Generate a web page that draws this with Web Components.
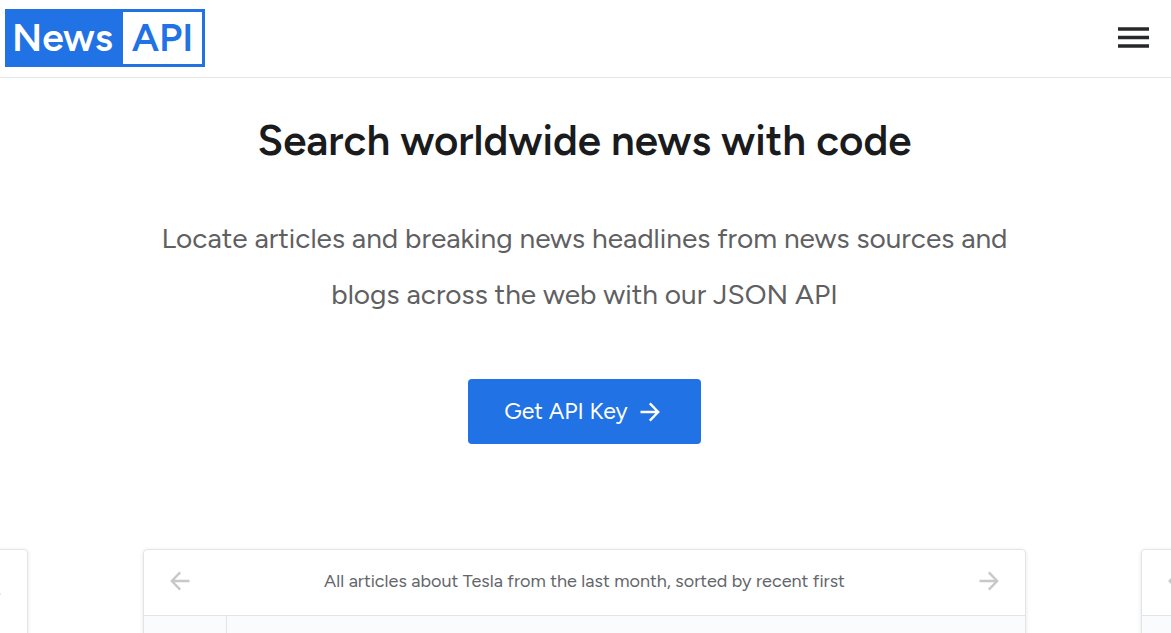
<!DOCTYPE html>
<html lang="en">
<head>
<meta charset="utf-8">
<meta name="viewport" content="width=device-width, initial-scale=1">
<title>News API</title>
<style>
  :root {
    --blue: #2172e5;
    --ink: #1a1b1d;
    --line: #e3e4e6;
  }
  body {
    margin: 0;
    background: #fff;
    color: var(--ink);
    font-family: Figtree, Lato, sans-serif;
  }
</style>
</head>
<body>
<site-header></site-header>
<main>
  <hero-section>
    <span slot="title">Search worldwide news with code</span>
    <span slot="text">Locate articles and breaking news headlines from news sources and blogs across the web with our JSON API</span>
    <cta-link slot="action" href="#register">Get API Key</cta-link>
  </hero-section>
  <example-carousel>
    <example-card tall></example-card>
    <example-card>All articles about Tesla from the last month, sorted by recent first</example-card>
    <example-card></example-card>
  </example-carousel>
</main>
<script>
const define = (name, html, setup) => {
  const template = document.createElement('template');
  template.innerHTML = html;
  customElements.define(name, class extends HTMLElement {
    constructor() {
      super();
      this.attachShadow({ mode: 'open' }).append(template.content.cloneNode(true));
    }
    connectedCallback() { if (setup) setup(this, this.shadowRoot); }
  });
};

define('site-logo', `
  <style>
    :host { display: block; }
    a {
      display: flex;
      box-sizing: border-box;
      width: 200px;
      border: 3px solid var(--blue);
      color: var(--blue);
      font-size: 39px;
      font-weight: 600;
      line-height: 52px;
      text-decoration: none;
    }
    span { flex: 1; text-align: center; }
    .news { box-sizing: border-box; flex: 0 0 115px; padding-right: 6px; background: var(--blue); color: #fff; }
  </style>
  <a href="#home"><span class="news">News</span><span>API</span></a>`);

define('site-header', `
  <style>
    :host { display: block; border-bottom: 1px solid var(--line); }
    header {
      display: flex;
      align-items: center;
      justify-content: space-between;
      padding: 9px 17px 10px 5px;
    }
    button { padding: 0 5px; border: 0; background: none; color: #27282a; }
    svg { display: block; }
  </style>
  <header>
    <site-logo></site-logo>
    <button type="button" aria-label="Menu">
      <svg width="31" height="22" viewBox="0 0 31 22" fill="currentColor">
        <path d="M0 .2h31v3.6H0zM0 8.7h31v3.6H0zM0 17.2h31v3.6H0z"/>
      </svg>
    </button>
  </header>`);

define('arrow-icon', `
  <style>
    :host { display: block; width: 20px; height: 20px; }
    :host([left]) { transform: scaleX(-1); }
    svg { display: block; width: 100%; height: 100%; }
  </style>
  <svg viewBox="0 0 20 20" fill="none" stroke="currentColor" stroke-width="2.4" aria-hidden="true">
    <path d="M.5 10H18M9.8 1.4L18.2 10L9.8 18.6"/>
  </svg>`);

define('cta-link', `
  <style>
    :host { display: inline-block; }
    a {
      display: flex;
      align-items: center;
      gap: 12px;
      padding: 0 41px 0 36px;
      border-radius: 4px;
      background: var(--blue);
      color: #fff;
      font-size: 23px;
      line-height: 65px;
      text-decoration: none;
    }
  </style>
  <a><slot></slot><arrow-icon></arrow-icon></a>`,
  (host, root) => { root.querySelector('a').href = host.getAttribute('href'); });

define('hero-section', `
  <style>
    :host { display: block; padding: 33px 2px 101px 0; text-align: center; }
    h1 { margin: 0 0 39px; font-size: 42px; font-weight: 600; line-height: 60px; }
    p {
      max-width: 880px;
      margin: 0 auto 57px;
      color: #5f6062;
      font-size: 28px;
      line-height: 56px;
    }
  </style>
  <h1><slot name="title"></slot></h1>
  <p><slot name="text"></slot></p>
  <slot name="action"></slot>`);

define('example-carousel', `
  <style>
    :host {
      display: flex;
      justify-content: center;
      gap: 115px;
      padding: 4px 2px 40px 0;
      overflow: hidden;
    }
  </style>
  <slot></slot>`);

define('example-card', `
  <style>
    :host {
      display: block;
      box-sizing: border-box;
      flex: 0 0 calc(100% - 286px);
      border: 1px solid var(--line);
      border-radius: 4px;
      box-shadow: 0 1px 4px rgba(0, 0, 0, .1);
      overflow: hidden;
    }
    header {
      display: flex;
      align-items: center;
      justify-content: space-between;
      box-sizing: border-box;
      min-height: 66px;
      padding: 0 26px 3px;
      border-bottom: 1px solid var(--line);
      color: #63666a;
      font-size: 18px;
    }
    :host([tall]) header { min-height: 92px; }
    button { padding: 0; border: 0; background: none; color: #c8c8c8; }
    .code {
      display: grid;
      grid-template-columns: 83px 1fr;
      min-height: 254px;
      background: #fafbfd;
    }
    .gutter { border-right: 1px solid var(--line); }
  </style>
  <header>
    <button type="button" aria-label="Previous example"><arrow-icon left></arrow-icon></button>
    <span><slot></slot></span>
    <button type="button" aria-label="Next example"><arrow-icon></arrow-icon></button>
  </header>
  <div class="code"><div class="gutter"></div></div>`);
</script>
</body>
</html>
